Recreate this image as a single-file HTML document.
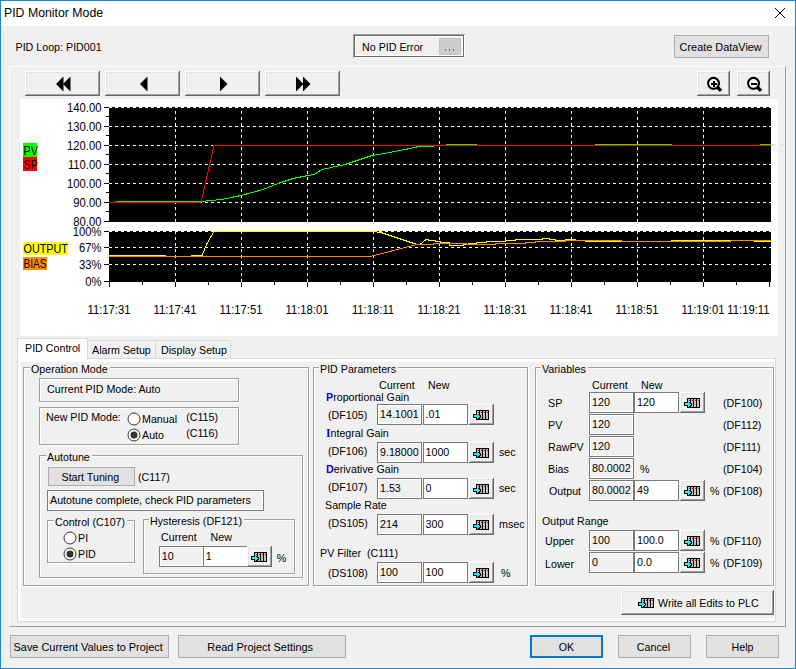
<!DOCTYPE html>
<html><head><meta charset="utf-8"><style>
html,body{margin:0;padding:0;}
body{width:796px;height:669px;position:relative;overflow:hidden;background:#f0f0f0;font-family:"Liberation Sans",sans-serif;}
.t{position:absolute;white-space:nowrap;line-height:1;}
.r{position:absolute;box-sizing:border-box;}
svg{position:absolute;overflow:visible;}
</style></head><body>

<div class="r" style="left:1px;top:1px;width:794px;height:25px;background:#fff;"></div>
<div class="t" style="left:4px;top:7px;font-size:12.3px;color:#000;">PID Monitor Mode</div>
<svg style="left:775px;top:8px" width="10" height="10" shape-rendering="crispEdges" fill="#000"><rect x="0" y="0" width="1" height="1"/><rect x="9" y="0" width="1" height="1"/><rect x="1" y="1" width="1" height="1"/><rect x="8" y="1" width="1" height="1"/><rect x="2" y="2" width="1" height="1"/><rect x="7" y="2" width="1" height="1"/><rect x="3" y="3" width="1" height="1"/><rect x="6" y="3" width="1" height="1"/><rect x="4" y="4" width="1" height="1"/><rect x="5" y="4" width="1" height="1"/><rect x="5" y="5" width="1" height="1"/><rect x="4" y="5" width="1" height="1"/><rect x="6" y="6" width="1" height="1"/><rect x="3" y="6" width="1" height="1"/><rect x="7" y="7" width="1" height="1"/><rect x="2" y="7" width="1" height="1"/><rect x="8" y="8" width="1" height="1"/><rect x="1" y="8" width="1" height="1"/><rect x="9" y="9" width="1" height="1"/><rect x="0" y="9" width="1" height="1"/></svg>
<div class="t" style="left:15.5px;top:42px;font-size:10.7px;color:#000;">PID Loop: PID001</div>
<div class="r" style="left:353px;top:34px;width:112px;height:24px;background:#f0f0f0;box-shadow:inset 1px 1px 0 #a0a0a0, inset -1px -1px 0 #fff, inset 2px 2px 0 #696969, inset -2px -2px 0 #696969, inset 3px 3px 0 #fff, inset -3px -3px 0 #fff;"></div>
<div class="t" style="left:362px;top:42px;font-size:10.7px;color:#000;">No PID Error</div>
<div class="r" style="left:439px;top:38px;width:22px;height:17px;background:#cdcdcd;border:1px solid #c4c4c4;"></div>
<svg style="left:0;top:0" width="796" height="60" shape-rendering="crispEdges"><rect x="445" y="49" width="1" height="2" fill="#7a6f9a"/><rect x="449" y="49" width="1" height="2" fill="#7a6f9a"/><rect x="453" y="49" width="1" height="2" fill="#7a6f9a"/></svg>
<div class="r" style="left:674px;top:35px;width:95px;height:23px;background:#e1e1e1;border:1px solid #adadad;"></div>
<div class="t" style="left:679.6px;top:42px;font-size:10.9px;color:#000;">Create DataView</div>
<div class="r" style="left:9px;top:66px;width:777px;height:561px;border-left:1px solid #fff;border-top:1px solid #fff;border-right:1px solid #a0a0a0;border-bottom:1px solid #a0a0a0;"></div>
<div class="r" style="left:25px;top:71px;width:75px;height:25px;background:#f0f0f0;box-shadow: inset -1px -1px 0 #696969, inset 1px 1px 0 #fff, inset -2px -2px 0 #a0a0a0, inset 2px 2px 0 #e3e3e3;"></div>
<div class="r" style="left:105px;top:71px;width:75px;height:25px;background:#f0f0f0;box-shadow: inset -1px -1px 0 #696969, inset 1px 1px 0 #fff, inset -2px -2px 0 #a0a0a0, inset 2px 2px 0 #e3e3e3;"></div>
<div class="r" style="left:185px;top:71px;width:75px;height:25px;background:#f0f0f0;box-shadow: inset -1px -1px 0 #696969, inset 1px 1px 0 #fff, inset -2px -2px 0 #a0a0a0, inset 2px 2px 0 #e3e3e3;"></div>
<div class="r" style="left:265px;top:71px;width:75px;height:25px;background:#f0f0f0;box-shadow: inset -1px -1px 0 #696969, inset 1px 1px 0 #fff, inset -2px -2px 0 #a0a0a0, inset 2px 2px 0 #e3e3e3;"></div>
<svg style="left:0;top:0" width="796" height="100"><polygon points="56,84 63.5,76.5 63.5,91.5" fill="#000"/><polygon points="63,84 70.5,76.5 70.5,91.5" fill="#000"/><polygon points="140,84 147.5,76.5 147.5,91.5" fill="#000"/><polygon points="227.5,84 220,76.5 220,91.5" fill="#000"/><polygon points="303.5,84 296,76.5 296,91.5" fill="#000"/><polygon points="310.5,84 303,76.5 303,91.5" fill="#000"/></svg>
<div class="r" style="left:697px;top:71px;width:33px;height:25px;background:#f0f0f0;box-shadow: inset -1px -1px 0 #696969, inset 1px 1px 0 #fff, inset -2px -2px 0 #a0a0a0, inset 2px 2px 0 #e3e3e3;"></div>
<div class="r" style="left:737px;top:71px;width:33px;height:25px;background:#f0f0f0;box-shadow: inset -1px -1px 0 #696969, inset 1px 1px 0 #fff, inset -2px -2px 0 #a0a0a0, inset 2px 2px 0 #e3e3e3;"></div>
<svg style="left:0;top:0" width="796" height="100"><circle cx="713.5" cy="83.3" r="5.45" fill="#fff" stroke="#000" stroke-width="2.1"/><line x1="717.1" y1="86.89999999999999" x2="721.1" y2="90.89999999999999" stroke="#000" stroke-width="3.4"/><rect x="711" y="83" width="6" height="2" fill="#000" shape-rendering="crispEdges"/><rect x="713" y="81" width="2" height="6" fill="#000" shape-rendering="crispEdges"/><circle cx="753.5" cy="83.3" r="5.45" fill="#fff" stroke="#000" stroke-width="2.1"/><line x1="757.1" y1="86.89999999999999" x2="761.1" y2="90.89999999999999" stroke="#000" stroke-width="3.4"/><rect x="751" y="83" width="6" height="2" fill="#000" shape-rendering="crispEdges"/></svg>
<div class="r" style="left:20px;top:99px;width:758px;height:237px;background:#fff;"></div>
<svg style="left:0;top:0" width="796" height="340" shape-rendering="crispEdges" font-family="Liberation Sans" font-size="12"><rect x="109" y="107" width="662" height="115" fill="#000"/><rect x="109" y="231" width="662" height="51" fill="#000"/><line x1="109" y1="107.5" x2="771" y2="107.5" stroke="#fff" stroke-dasharray="3 3"/><line x1="109" y1="126.5" x2="771" y2="126.5" stroke="#fff" stroke-dasharray="3 3"/><line x1="109" y1="145.5" x2="771" y2="145.5" stroke="#fff" stroke-dasharray="3 3"/><line x1="109" y1="164.5" x2="771" y2="164.5" stroke="#fff" stroke-dasharray="3 3"/><line x1="109" y1="183.5" x2="771" y2="183.5" stroke="#fff" stroke-dasharray="3 3"/><line x1="109" y1="202.5" x2="771" y2="202.5" stroke="#fff" stroke-dasharray="3 3"/><line x1="109" y1="231.5" x2="771" y2="231.5" stroke="#fff" stroke-dasharray="3 3"/><line x1="109" y1="247.5" x2="771" y2="247.5" stroke="#fff" stroke-dasharray="3 3"/><line x1="109" y1="264.5" x2="771" y2="264.5" stroke="#fff" stroke-dasharray="3 3"/><line x1="175.5" y1="107" x2="175.5" y2="222" stroke="#fff" stroke-dasharray="3 3" stroke-dashoffset="2"/><line x1="175.5" y1="231" x2="175.5" y2="282" stroke="#fff" stroke-dasharray="3 3"/><line x1="241.5" y1="107" x2="241.5" y2="222" stroke="#fff" stroke-dasharray="3 3" stroke-dashoffset="2"/><line x1="241.5" y1="231" x2="241.5" y2="282" stroke="#fff" stroke-dasharray="3 3"/><line x1="307.5" y1="107" x2="307.5" y2="222" stroke="#fff" stroke-dasharray="3 3" stroke-dashoffset="2"/><line x1="307.5" y1="231" x2="307.5" y2="282" stroke="#fff" stroke-dasharray="3 3"/><line x1="373.5" y1="107" x2="373.5" y2="222" stroke="#fff" stroke-dasharray="3 3" stroke-dashoffset="2"/><line x1="373.5" y1="231" x2="373.5" y2="282" stroke="#fff" stroke-dasharray="3 3"/><line x1="439.5" y1="107" x2="439.5" y2="222" stroke="#fff" stroke-dasharray="3 3" stroke-dashoffset="2"/><line x1="439.5" y1="231" x2="439.5" y2="282" stroke="#fff" stroke-dasharray="3 3"/><line x1="505.5" y1="107" x2="505.5" y2="222" stroke="#fff" stroke-dasharray="3 3" stroke-dashoffset="2"/><line x1="505.5" y1="231" x2="505.5" y2="282" stroke="#fff" stroke-dasharray="3 3"/><line x1="571.5" y1="107" x2="571.5" y2="222" stroke="#fff" stroke-dasharray="3 3" stroke-dashoffset="2"/><line x1="571.5" y1="231" x2="571.5" y2="282" stroke="#fff" stroke-dasharray="3 3"/><line x1="637.5" y1="107" x2="637.5" y2="222" stroke="#fff" stroke-dasharray="3 3" stroke-dashoffset="2"/><line x1="637.5" y1="231" x2="637.5" y2="282" stroke="#fff" stroke-dasharray="3 3"/><line x1="703.5" y1="107" x2="703.5" y2="222" stroke="#fff" stroke-dasharray="3 3" stroke-dashoffset="2"/><line x1="703.5" y1="231" x2="703.5" y2="282" stroke="#fff" stroke-dasharray="3 3"/><line x1="104" y1="107.5" x2="109" y2="107.5" stroke="#000"/><line x1="106" y1="116.5" x2="109" y2="116.5" stroke="#000"/><line x1="104" y1="126.5" x2="109" y2="126.5" stroke="#000"/><line x1="106" y1="135.5" x2="109" y2="135.5" stroke="#000"/><line x1="104" y1="145.5" x2="109" y2="145.5" stroke="#000"/><line x1="106" y1="154.5" x2="109" y2="154.5" stroke="#000"/><line x1="104" y1="164.5" x2="109" y2="164.5" stroke="#000"/><line x1="106" y1="173.5" x2="109" y2="173.5" stroke="#000"/><line x1="104" y1="183.5" x2="109" y2="183.5" stroke="#000"/><line x1="106" y1="192.5" x2="109" y2="192.5" stroke="#000"/><line x1="104" y1="202.5" x2="109" y2="202.5" stroke="#000"/><line x1="106" y1="211.5" x2="109" y2="211.5" stroke="#000"/><line x1="104" y1="221.5" x2="109" y2="221.5" stroke="#000"/><line x1="104" y1="231.5" x2="109" y2="231.5" stroke="#000"/><line x1="104" y1="247.5" x2="109" y2="247.5" stroke="#000"/><line x1="104" y1="264.5" x2="109" y2="264.5" stroke="#000"/><line x1="104" y1="281.5" x2="109" y2="281.5" stroke="#000"/><line x1="109.5" y1="282" x2="109.5" y2="287" stroke="#000"/><line x1="142.5" y1="282" x2="142.5" y2="285" stroke="#000"/><line x1="175.5" y1="282" x2="175.5" y2="287" stroke="#000"/><line x1="208.5" y1="282" x2="208.5" y2="285" stroke="#000"/><line x1="241.5" y1="282" x2="241.5" y2="287" stroke="#000"/><line x1="274.5" y1="282" x2="274.5" y2="285" stroke="#000"/><line x1="307.5" y1="282" x2="307.5" y2="287" stroke="#000"/><line x1="340.5" y1="282" x2="340.5" y2="285" stroke="#000"/><line x1="373.5" y1="282" x2="373.5" y2="287" stroke="#000"/><line x1="406.5" y1="282" x2="406.5" y2="285" stroke="#000"/><line x1="439.5" y1="282" x2="439.5" y2="287" stroke="#000"/><line x1="472.5" y1="282" x2="472.5" y2="285" stroke="#000"/><line x1="505.5" y1="282" x2="505.5" y2="287" stroke="#000"/><line x1="538.5" y1="282" x2="538.5" y2="285" stroke="#000"/><line x1="571.5" y1="282" x2="571.5" y2="287" stroke="#000"/><line x1="604.5" y1="282" x2="604.5" y2="285" stroke="#000"/><line x1="637.5" y1="282" x2="637.5" y2="287" stroke="#000"/><line x1="670.5" y1="282" x2="670.5" y2="285" stroke="#000"/><line x1="703.5" y1="282" x2="703.5" y2="287" stroke="#000"/><line x1="736.5" y1="282" x2="736.5" y2="285" stroke="#000"/><line x1="769.5" y1="282" x2="769.5" y2="287" stroke="#000"/><text transform="translate(101.5,112) scale(0.94,1)" text-anchor="end">140.00</text><text transform="translate(101.5,131) scale(0.94,1)" text-anchor="end">130.00</text><text transform="translate(101.5,150) scale(0.94,1)" text-anchor="end">120.00</text><text transform="translate(101.5,169) scale(0.94,1)" text-anchor="end">110.00</text><text transform="translate(101.5,188) scale(0.94,1)" text-anchor="end">100.00</text><text transform="translate(101.5,207) scale(0.94,1)" text-anchor="end">90.00</text><text transform="translate(101.5,226) scale(0.94,1)" text-anchor="end">80.00</text><text transform="translate(101.5,236) scale(0.94,1)" text-anchor="end">100%</text><text transform="translate(101.5,252) scale(0.94,1)" text-anchor="end">67%</text><text transform="translate(101.5,269) scale(0.94,1)" text-anchor="end">33%</text><text transform="translate(101.5,286) scale(0.94,1)" text-anchor="end">0%</text><text transform="translate(109,314) scale(0.94,1)" text-anchor="middle">11:17:31</text><text transform="translate(175,314) scale(0.94,1)" text-anchor="middle">11:17:41</text><text transform="translate(241,314) scale(0.94,1)" text-anchor="middle">11:17:51</text><text transform="translate(307,314) scale(0.94,1)" text-anchor="middle">11:18:01</text><text transform="translate(373,314) scale(0.94,1)" text-anchor="middle">11:18:11</text><text transform="translate(439,314) scale(0.94,1)" text-anchor="middle">11:18:21</text><text transform="translate(505,314) scale(0.94,1)" text-anchor="middle">11:18:31</text><text transform="translate(571,314) scale(0.94,1)" text-anchor="middle">11:18:41</text><text transform="translate(637,314) scale(0.94,1)" text-anchor="middle">11:18:51</text><text transform="translate(703,314) scale(0.94,1)" text-anchor="middle">11:19:01</text><text transform="translate(769.5,314) scale(0.94,1)" text-anchor="end">11:19:11</text><rect x="23" y="143" width="14" height="14" fill="#00ff00"/><rect x="23" y="157" width="14" height="14" fill="#ff0000"/><rect x="23" y="242" width="45" height="13" fill="#ffff00"/><rect x="23" y="257" width="24" height="13" fill="#ff8c00"/><text transform="translate(23.5,155) scale(0.9,1)" text-anchor="start">PV</text><text transform="translate(23.5,169) scale(0.9,1)" text-anchor="start">SP</text><text transform="translate(23.5,253) scale(0.9,1)" text-anchor="start">OUTPUT</text><text transform="translate(23.5,268) scale(0.84,1)" text-anchor="start">BIAS</text><polyline points="116,201.5 201,201.5 211,200.5 222,199.5 231,197.5 241,195.5 252,192.5 263,189.5 278,183.5 293,178.5 308,175.5 314,174.5 322,169.5 345,164.5 372,155.5 390,152.5 410,148.5 415,147.5 418,146.5 433,146.5 433,145.5 446,145.5 446,144.5 476,144.5 476,145.5 595,145.5 595,144.5 671,144.5 671,145.5 760,145.5 760,144.5 771,144.5" fill="none" stroke="#00ff00" stroke-width="1"/><polyline points="109,202.5 201,202.5 214,145.5 771,145.5" fill="none" stroke="#ff0000" stroke-width="1"/><polyline points="109,255.5 165,255.5 165,256.5 191,256.5 191,255.5 202,255.5 207,243.5 214,231.5 373,231.5 381,232.5 417,244.5 420,244.5 426,239.5 428,239.5 429,240.5 435,240.5 435,241.5 440,241.5 440,242.5 449,242.5 449,244.5 450,245.5 463,245.5 463,244.5 468,244.5 468,243.5 476,243.5 476,242.5 486,242.5 486,241.5 505,241.5 505,240.5 515,240.5 515,239.5 542,239.5 542,238.5 549,238.5 549,239.5 555,239.5 555,240.5 565,240.5 565,239.5 575,239.5 575,240.5 585,240.5 585,241.5 671,241.5 671,240.5 754,240.5 754,241.5 771,241.5" fill="none" stroke="#ffff00" stroke-width="1"/><polyline points="109,256.5 370,256.5 417,244.5 433,244.5 433,243.5 466,243.5 466,244.5 495,244.5 495,243.5 525,243.5 525,242.5 535,242.5 535,241.5 565,241.5 565,240.5 621,240.5 621,241.5 671,241.5 730,241.5 730,240.5 771,240.5" fill="none" stroke="#ff8c00" stroke-width="1"/></svg>
<div class="r" style="left:17px;top:358px;width:759px;height:264px;background:#fff;border:1px solid #d9d9d9;"></div>
<div class="r" style="left:21px;top:362px;width:753px;height:256px;background:#f0f0f0;"></div>
<div class="r" style="left:87px;top:340px;width:69px;height:19px;background:#f0f0f0;border:1px solid #d9d9d9;"></div>
<div class="r" style="left:155px;top:340px;width:76px;height:19px;background:#f0f0f0;border:1px solid #d9d9d9;"></div>
<div class="r" style="left:17px;top:338px;width:71px;height:22px;background:#fff;border:1px solid #d9d9d9;border-bottom:none;"></div>
<div class="t" style="left:25px;top:343px;font-size:10.7px;color:#000;">PID Control</div>
<div class="t" style="left:92px;top:345px;font-size:10.7px;color:#000;">Alarm Setup</div>
<div class="t" style="left:161px;top:345px;font-size:10.7px;color:#000;">Display Setup</div>
<div class="r" style="left:23px;top:367px;width:286px;height:219px;border:1px solid #a0a0a0;box-shadow:inset 1px 1px 0 #fff, 1px 1px 0 #fff;"></div>
<div class="t" style="left:30px;top:363px;font-size:10.7px;background:#f0f0f0;padding:1px 2px 1px 1px;">Operation Mode</div>
<div class="r" style="left:39px;top:378px;width:200px;height:24px;border:1px solid #a0a0a0;box-shadow:inset 1px 1px 0 #fff, 1px 1px 0 #fff;"></div>
<div class="t" style="left:47px;top:384px;font-size:10.7px;color:#000;">Current PID Mode: Auto</div>
<div class="r" style="left:39px;top:407px;width:200px;height:38px;border:1px solid #a0a0a0;box-shadow:inset 1px 1px 0 #fff, 1px 1px 0 #fff;"></div>
<div class="t" style="left:46px;top:412px;font-size:10.7px;color:#000;">New PID Mode:</div>
<svg style="left:126.5px;top:411.5px" width="14" height="14"><circle cx="7" cy="7" r="6" fill="#fff" stroke="#333" stroke-width="1"/></svg>
<svg style="left:126.5px;top:427.5px" width="14" height="14"><circle cx="7" cy="7" r="6" fill="#fff" stroke="#333" stroke-width="1"/><circle cx="7" cy="7" r="3.5" fill="#333"/></svg>
<div class="t" style="left:142px;top:414px;font-size:10.7px;color:#000;">Manual</div>
<div class="t" style="left:142px;top:430px;font-size:10.7px;color:#000;">Auto</div>
<div class="t" style="left:186.2px;top:412px;font-size:10.7px;color:#000;">(C115)</div>
<div class="t" style="left:186.2px;top:428px;font-size:10.7px;color:#000;">(C116)</div>
<div class="r" style="left:39px;top:455px;width:264px;height:123px;border:1px solid #a0a0a0;box-shadow:inset 1px 1px 0 #fff, 1px 1px 0 #fff;"></div>
<div class="t" style="left:46px;top:451px;font-size:10.7px;background:#f0f0f0;padding:1px 2px 1px 1px;">Autotune</div>
<div class="r" style="left:48px;top:467px;width:87px;height:19px;background:#e1e1e1;border:1px solid #adadad;"></div>
<div class="t" style="left:61.5px;top:472px;font-size:10.7px;color:#000;">Start Tuning</div>
<div class="t" style="left:138px;top:472px;font-size:10.7px;color:#000;">(C117)</div>
<div class="r" style="left:47px;top:490px;width:217px;height:21px;background:#f0f0f0;border:1px solid #7a7a7a;box-shadow:inset 1px 1px 0 #fff, inset -1px -1px 0 #fff;"></div>
<div class="t" style="left:50px;top:495px;font-size:10.7px;color:#000;">Autotune complete, check PID parameters</div>
<div class="r" style="left:47px;top:520px;width:88px;height:43px;border:1px solid #a0a0a0;box-shadow:inset 1px 1px 0 #fff, 1px 1px 0 #fff;"></div>
<div class="t" style="left:54px;top:516px;font-size:10.7px;background:#f0f0f0;padding:1px 2px 1px 1px;">Control (C107)</div>
<svg style="left:62.5px;top:530.5px" width="14" height="14"><circle cx="7" cy="7" r="6" fill="#fff" stroke="#333" stroke-width="1"/></svg>
<svg style="left:62.5px;top:546.5px" width="14" height="14"><circle cx="7" cy="7" r="6" fill="#fff" stroke="#333" stroke-width="1"/><circle cx="7" cy="7" r="3.5" fill="#333"/></svg>
<div class="t" style="left:78px;top:533px;font-size:10.7px;color:#000;">PI</div>
<div class="t" style="left:78px;top:549px;font-size:10.7px;color:#000;">PID</div>
<div class="r" style="left:143px;top:519px;width:152px;height:55px;border:1px solid #a0a0a0;box-shadow:inset 1px 1px 0 #fff, 1px 1px 0 #fff;"></div>
<div class="t" style="left:149px;top:515px;font-size:10.7px;background:#f0f0f0;padding:1px 2px 1px 1px;">Hysteresis (DF121)</div>
<div class="t" style="left:161px;top:532px;font-size:10.7px;color:#000;">Current</div>
<div class="t" style="left:210.5px;top:532px;font-size:10.7px;color:#000;">New</div>
<div class="r" style="left:159px;top:546px;width:45px;height:21px;background:#f0f0f0;border:1px solid #7a7a7a;box-shadow:inset 1px 1px 0 #fff, inset -1px -1px 0 #fff;"></div>
<div class="t" style="left:161.7px;top:551px;font-size:10.7px;color:#000;">10</div>
<div class="r" style="left:203px;top:546px;width:46px;height:21px;background:#fff;border:1px solid #7a7a7a;"></div>
<div class="t" style="left:205.7px;top:551px;font-size:10.7px;color:#000;">1</div>
<div class="r" style="left:247px;top:546px;width:25px;height:21px;background:#f0f0f0;box-shadow: inset -1px -1px 0 #696969, inset 1px 1px 0 #fff, inset -2px -2px 0 #a0a0a0, inset 2px 2px 0 #e3e3e3;"></div>
<svg style="left:251px;top:552px" width="17" height="11" shape-rendering="crispEdges"><rect x="3" y="0" width="13" height="10" fill="#000"/><rect x="4" y="1" width="2" height="3" fill="#c0c0c0"/><rect x="7" y="1" width="2" height="8" fill="#c0c0c0"/><rect x="10" y="1" width="2" height="8" fill="#c0c0c0"/><rect x="13" y="1" width="2" height="8" fill="#c0c0c0"/><rect x="5" y="2" width="1" height="1" fill="#ff0000"/><rect x="8" y="2" width="1" height="1" fill="#ff0000"/><rect x="11" y="2" width="1" height="1" fill="#ff0000"/><rect x="14" y="2" width="1" height="1" fill="#ff0000"/><rect x="0" y="4" width="3" height="4" fill="#000"/><rect x="7" y="5" width="1" height="3" fill="#000"/><rect x="1" y="5" width="3" height="2" fill="#00ffff"/><rect x="4" y="4" width="1" height="5" fill="#00ffff"/><rect x="5" y="5" width="1" height="3" fill="#00ffff"/><rect x="6" y="6" width="1" height="1" fill="#00ffff"/></svg>
<div class="t" style="left:276.8px;top:553px;font-size:10.7px;color:#000;">%</div>
<div class="r" style="left:313px;top:367px;width:215px;height:219px;border:1px solid #a0a0a0;box-shadow:inset 1px 1px 0 #fff, 1px 1px 0 #fff;"></div>
<div class="t" style="left:319px;top:363px;font-size:10.7px;background:#f0f0f0;padding:1px 2px 1px 1px;">PID Parameters</div>
<div class="t" style="left:379px;top:380px;font-size:10.7px;color:#000;">Current</div>
<div class="t" style="left:428px;top:380px;font-size:10.7px;color:#000;">New</div>
<div class="t" style="left:326px;top:392px;font-size:10.7px;"><b style="color:#0000ff;">P</b>roportional Gain</div>
<div class="t" style="left:328px;top:410px;font-size:10.7px;color:#000;">(DF105)</div>
<div class="r" style="left:377px;top:404px;width:45px;height:21px;background:#f0f0f0;border:1px solid #7a7a7a;box-shadow:inset 1px 1px 0 #fff, inset -1px -1px 0 #fff;"></div>
<div class="t" style="left:380px;top:409px;font-size:10.7px;color:#000;">14.1001</div>
<div class="r" style="left:423px;top:404px;width:45px;height:21px;background:#fff;border:1px solid #7a7a7a;"></div>
<div class="t" style="left:425.5px;top:409px;font-size:10.7px;color:#000;">.01</div>
<div class="r" style="left:469px;top:404px;width:25px;height:21px;background:#f0f0f0;box-shadow: inset -1px -1px 0 #696969, inset 1px 1px 0 #fff, inset -2px -2px 0 #a0a0a0, inset 2px 2px 0 #e3e3e3;"></div>
<svg style="left:473px;top:410px" width="17" height="11" shape-rendering="crispEdges"><rect x="3" y="0" width="13" height="10" fill="#000"/><rect x="4" y="1" width="2" height="3" fill="#c0c0c0"/><rect x="7" y="1" width="2" height="8" fill="#c0c0c0"/><rect x="10" y="1" width="2" height="8" fill="#c0c0c0"/><rect x="13" y="1" width="2" height="8" fill="#c0c0c0"/><rect x="5" y="2" width="1" height="1" fill="#ff0000"/><rect x="8" y="2" width="1" height="1" fill="#ff0000"/><rect x="11" y="2" width="1" height="1" fill="#ff0000"/><rect x="14" y="2" width="1" height="1" fill="#ff0000"/><rect x="0" y="4" width="3" height="4" fill="#000"/><rect x="7" y="5" width="1" height="3" fill="#000"/><rect x="1" y="5" width="3" height="2" fill="#00ffff"/><rect x="4" y="4" width="1" height="5" fill="#00ffff"/><rect x="5" y="5" width="1" height="3" fill="#00ffff"/><rect x="6" y="6" width="1" height="1" fill="#00ffff"/></svg>
<div class="t" style="left:326px;top:428px;font-size:10.7px;"><b style="color:#0000ff;font-family:'Liberation Serif',serif;font-size:11.5px;">I</b>ntegral Gain</div>
<div class="t" style="left:328px;top:446px;font-size:10.7px;color:#000;">(DF106)</div>
<div class="r" style="left:377px;top:442px;width:45px;height:21px;background:#f0f0f0;border:1px solid #7a7a7a;box-shadow:inset 1px 1px 0 #fff, inset -1px -1px 0 #fff;"></div>
<div class="t" style="left:380px;top:447px;font-size:10.7px;color:#000;">9.18000</div>
<div class="r" style="left:423px;top:442px;width:45px;height:21px;background:#fff;border:1px solid #7a7a7a;"></div>
<div class="t" style="left:425.5px;top:447px;font-size:10.7px;color:#000;">1000</div>
<div class="r" style="left:469px;top:442px;width:25px;height:21px;background:#f0f0f0;box-shadow: inset -1px -1px 0 #696969, inset 1px 1px 0 #fff, inset -2px -2px 0 #a0a0a0, inset 2px 2px 0 #e3e3e3;"></div>
<svg style="left:473px;top:448px" width="17" height="11" shape-rendering="crispEdges"><rect x="3" y="0" width="13" height="10" fill="#000"/><rect x="4" y="1" width="2" height="3" fill="#c0c0c0"/><rect x="7" y="1" width="2" height="8" fill="#c0c0c0"/><rect x="10" y="1" width="2" height="8" fill="#c0c0c0"/><rect x="13" y="1" width="2" height="8" fill="#c0c0c0"/><rect x="5" y="2" width="1" height="1" fill="#ff0000"/><rect x="8" y="2" width="1" height="1" fill="#ff0000"/><rect x="11" y="2" width="1" height="1" fill="#ff0000"/><rect x="14" y="2" width="1" height="1" fill="#ff0000"/><rect x="0" y="4" width="3" height="4" fill="#000"/><rect x="7" y="5" width="1" height="3" fill="#000"/><rect x="1" y="5" width="3" height="2" fill="#00ffff"/><rect x="4" y="4" width="1" height="5" fill="#00ffff"/><rect x="5" y="5" width="1" height="3" fill="#00ffff"/><rect x="6" y="6" width="1" height="1" fill="#00ffff"/></svg>
<div class="t" style="left:499px;top:447px;font-size:10.7px;color:#000;">sec</div>
<div class="t" style="left:326px;top:464px;font-size:10.7px;"><b style="color:#0000ff;">D</b>erivative Gain</div>
<div class="t" style="left:328px;top:482px;font-size:10.7px;color:#000;">(DF107)</div>
<div class="r" style="left:377px;top:478px;width:45px;height:21px;background:#f0f0f0;border:1px solid #7a7a7a;box-shadow:inset 1px 1px 0 #fff, inset -1px -1px 0 #fff;"></div>
<div class="t" style="left:380px;top:483px;font-size:10.7px;color:#000;">1.53</div>
<div class="r" style="left:423px;top:478px;width:45px;height:21px;background:#fff;border:1px solid #7a7a7a;"></div>
<div class="t" style="left:425.5px;top:483px;font-size:10.7px;color:#000;">0</div>
<div class="r" style="left:469px;top:478px;width:25px;height:21px;background:#f0f0f0;box-shadow: inset -1px -1px 0 #696969, inset 1px 1px 0 #fff, inset -2px -2px 0 #a0a0a0, inset 2px 2px 0 #e3e3e3;"></div>
<svg style="left:473px;top:484px" width="17" height="11" shape-rendering="crispEdges"><rect x="3" y="0" width="13" height="10" fill="#000"/><rect x="4" y="1" width="2" height="3" fill="#c0c0c0"/><rect x="7" y="1" width="2" height="8" fill="#c0c0c0"/><rect x="10" y="1" width="2" height="8" fill="#c0c0c0"/><rect x="13" y="1" width="2" height="8" fill="#c0c0c0"/><rect x="5" y="2" width="1" height="1" fill="#ff0000"/><rect x="8" y="2" width="1" height="1" fill="#ff0000"/><rect x="11" y="2" width="1" height="1" fill="#ff0000"/><rect x="14" y="2" width="1" height="1" fill="#ff0000"/><rect x="0" y="4" width="3" height="4" fill="#000"/><rect x="7" y="5" width="1" height="3" fill="#000"/><rect x="1" y="5" width="3" height="2" fill="#00ffff"/><rect x="4" y="4" width="1" height="5" fill="#00ffff"/><rect x="5" y="5" width="1" height="3" fill="#00ffff"/><rect x="6" y="6" width="1" height="1" fill="#00ffff"/></svg>
<div class="t" style="left:499px;top:483px;font-size:10.7px;color:#000;">sec</div>
<div class="t" style="left:325px;top:500px;font-size:10.7px;color:#000;">Sample Rate</div>
<div class="t" style="left:328px;top:518px;font-size:10.7px;color:#000;">(DS105)</div>
<div class="r" style="left:377px;top:514px;width:45px;height:21px;background:#f0f0f0;border:1px solid #7a7a7a;box-shadow:inset 1px 1px 0 #fff, inset -1px -1px 0 #fff;"></div>
<div class="t" style="left:380px;top:519px;font-size:10.7px;color:#000;">214</div>
<div class="r" style="left:423px;top:514px;width:45px;height:21px;background:#fff;border:1px solid #7a7a7a;"></div>
<div class="t" style="left:425.5px;top:519px;font-size:10.7px;color:#000;">300</div>
<div class="r" style="left:469px;top:514px;width:25px;height:21px;background:#f0f0f0;box-shadow: inset -1px -1px 0 #696969, inset 1px 1px 0 #fff, inset -2px -2px 0 #a0a0a0, inset 2px 2px 0 #e3e3e3;"></div>
<svg style="left:473px;top:520px" width="17" height="11" shape-rendering="crispEdges"><rect x="3" y="0" width="13" height="10" fill="#000"/><rect x="4" y="1" width="2" height="3" fill="#c0c0c0"/><rect x="7" y="1" width="2" height="8" fill="#c0c0c0"/><rect x="10" y="1" width="2" height="8" fill="#c0c0c0"/><rect x="13" y="1" width="2" height="8" fill="#c0c0c0"/><rect x="5" y="2" width="1" height="1" fill="#ff0000"/><rect x="8" y="2" width="1" height="1" fill="#ff0000"/><rect x="11" y="2" width="1" height="1" fill="#ff0000"/><rect x="14" y="2" width="1" height="1" fill="#ff0000"/><rect x="0" y="4" width="3" height="4" fill="#000"/><rect x="7" y="5" width="1" height="3" fill="#000"/><rect x="1" y="5" width="3" height="2" fill="#00ffff"/><rect x="4" y="4" width="1" height="5" fill="#00ffff"/><rect x="5" y="5" width="1" height="3" fill="#00ffff"/><rect x="6" y="6" width="1" height="1" fill="#00ffff"/></svg>
<div class="t" style="left:499px;top:519px;font-size:10.7px;color:#000;">msec</div>
<div class="t" style="left:320px;top:548px;font-size:10.7px;color:#000;">PV Filter&nbsp; (C111)</div>
<div class="t" style="left:328px;top:568px;font-size:10.7px;color:#000;">(DS108)</div>
<div class="r" style="left:377px;top:562px;width:45px;height:21px;background:#f0f0f0;border:1px solid #7a7a7a;box-shadow:inset 1px 1px 0 #fff, inset -1px -1px 0 #fff;"></div>
<div class="t" style="left:380px;top:567px;font-size:10.7px;color:#000;">100</div>
<div class="r" style="left:423px;top:562px;width:45px;height:21px;background:#fff;border:1px solid #7a7a7a;"></div>
<div class="t" style="left:425.5px;top:567px;font-size:10.7px;color:#000;">100</div>
<div class="r" style="left:469px;top:562px;width:25px;height:21px;background:#f0f0f0;box-shadow: inset -1px -1px 0 #696969, inset 1px 1px 0 #fff, inset -2px -2px 0 #a0a0a0, inset 2px 2px 0 #e3e3e3;"></div>
<svg style="left:473px;top:568px" width="17" height="11" shape-rendering="crispEdges"><rect x="3" y="0" width="13" height="10" fill="#000"/><rect x="4" y="1" width="2" height="3" fill="#c0c0c0"/><rect x="7" y="1" width="2" height="8" fill="#c0c0c0"/><rect x="10" y="1" width="2" height="8" fill="#c0c0c0"/><rect x="13" y="1" width="2" height="8" fill="#c0c0c0"/><rect x="5" y="2" width="1" height="1" fill="#ff0000"/><rect x="8" y="2" width="1" height="1" fill="#ff0000"/><rect x="11" y="2" width="1" height="1" fill="#ff0000"/><rect x="14" y="2" width="1" height="1" fill="#ff0000"/><rect x="0" y="4" width="3" height="4" fill="#000"/><rect x="7" y="5" width="1" height="3" fill="#000"/><rect x="1" y="5" width="3" height="2" fill="#00ffff"/><rect x="4" y="4" width="1" height="5" fill="#00ffff"/><rect x="5" y="5" width="1" height="3" fill="#00ffff"/><rect x="6" y="6" width="1" height="1" fill="#00ffff"/></svg>
<div class="t" style="left:501px;top:568px;font-size:10.7px;color:#000;">%</div>
<div class="r" style="left:535px;top:367px;width:239px;height:219px;border:1px solid #a0a0a0;box-shadow:inset 1px 1px 0 #fff, 1px 1px 0 #fff;"></div>
<div class="t" style="left:541px;top:363px;font-size:10.7px;background:#f0f0f0;padding:1px 2px 1px 1px;">Variables</div>
<div class="t" style="left:592px;top:380px;font-size:10.7px;color:#000;">Current</div>
<div class="t" style="left:641px;top:380px;font-size:10.7px;color:#000;">New</div>
<div class="t" style="left:548px;top:398px;font-size:10.7px;color:#000;">SP</div>
<div class="r" style="left:589px;top:392px;width:45px;height:21px;background:#f0f0f0;border:1px solid #7a7a7a;box-shadow:inset 1px 1px 0 #fff, inset -1px -1px 0 #fff;"></div>
<div class="t" style="left:592px;top:397px;font-size:10.7px;color:#000;">120</div>
<div class="r" style="left:634px;top:392px;width:45px;height:21px;background:#fff;border:1px solid #7a7a7a;"></div>
<div class="t" style="left:637px;top:397px;font-size:10.7px;color:#000;">120</div>
<div class="r" style="left:680px;top:392px;width:25px;height:21px;background:#f0f0f0;box-shadow: inset -1px -1px 0 #696969, inset 1px 1px 0 #fff, inset -2px -2px 0 #a0a0a0, inset 2px 2px 0 #e3e3e3;"></div>
<svg style="left:684px;top:398px" width="17" height="11" shape-rendering="crispEdges"><rect x="3" y="0" width="13" height="10" fill="#000"/><rect x="4" y="1" width="2" height="3" fill="#c0c0c0"/><rect x="7" y="1" width="2" height="8" fill="#c0c0c0"/><rect x="10" y="1" width="2" height="8" fill="#c0c0c0"/><rect x="13" y="1" width="2" height="8" fill="#c0c0c0"/><rect x="5" y="2" width="1" height="1" fill="#ff0000"/><rect x="8" y="2" width="1" height="1" fill="#ff0000"/><rect x="11" y="2" width="1" height="1" fill="#ff0000"/><rect x="14" y="2" width="1" height="1" fill="#ff0000"/><rect x="0" y="4" width="3" height="4" fill="#000"/><rect x="7" y="5" width="1" height="3" fill="#000"/><rect x="1" y="5" width="3" height="2" fill="#00ffff"/><rect x="4" y="4" width="1" height="5" fill="#00ffff"/><rect x="5" y="5" width="1" height="3" fill="#00ffff"/><rect x="6" y="6" width="1" height="1" fill="#00ffff"/></svg>
<div class="t" style="left:723px;top:398px;font-size:10.7px;color:#000;">(DF100)</div>
<div class="t" style="left:548px;top:420px;font-size:10.7px;color:#000;">PV</div>
<div class="r" style="left:589px;top:414px;width:45px;height:21px;background:#f0f0f0;border:1px solid #7a7a7a;box-shadow:inset 1px 1px 0 #fff, inset -1px -1px 0 #fff;"></div>
<div class="t" style="left:592px;top:419px;font-size:10.7px;color:#000;">120</div>
<div class="t" style="left:723px;top:420px;font-size:10.7px;color:#000;">(DF112)</div>
<div class="t" style="left:548px;top:442px;font-size:10.7px;color:#000;">RawPV</div>
<div class="r" style="left:589px;top:436px;width:45px;height:21px;background:#f0f0f0;border:1px solid #7a7a7a;box-shadow:inset 1px 1px 0 #fff, inset -1px -1px 0 #fff;"></div>
<div class="t" style="left:592px;top:441px;font-size:10.7px;color:#000;">120</div>
<div class="t" style="left:723px;top:442px;font-size:10.7px;color:#000;">(DF111)</div>
<div class="t" style="left:548px;top:464px;font-size:10.7px;color:#000;">Bias</div>
<div class="r" style="left:589px;top:458px;width:45px;height:21px;background:#f0f0f0;border:1px solid #7a7a7a;box-shadow:inset 1px 1px 0 #fff, inset -1px -1px 0 #fff;"></div>
<div class="t" style="left:592px;top:463px;font-size:10.7px;color:#000;">80.0002</div>
<div class="t" style="left:640px;top:464px;font-size:10.7px;color:#000;">%</div>
<div class="t" style="left:723px;top:464px;font-size:10.7px;color:#000;">(DF104)</div>
<div class="t" style="left:549px;top:486px;font-size:10.7px;color:#000;">Output</div>
<div class="r" style="left:589px;top:480px;width:45px;height:21px;background:#f0f0f0;border:1px solid #7a7a7a;box-shadow:inset 1px 1px 0 #fff, inset -1px -1px 0 #fff;"></div>
<div class="t" style="left:592px;top:485px;font-size:10.7px;color:#000;">80.0002</div>
<div class="r" style="left:634px;top:480px;width:45px;height:21px;background:#fff;border:1px solid #7a7a7a;"></div>
<div class="t" style="left:637px;top:485px;font-size:10.7px;color:#000;">49</div>
<div class="r" style="left:680px;top:480px;width:25px;height:21px;background:#f0f0f0;box-shadow: inset -1px -1px 0 #696969, inset 1px 1px 0 #fff, inset -2px -2px 0 #a0a0a0, inset 2px 2px 0 #e3e3e3;"></div>
<svg style="left:684px;top:486px" width="17" height="11" shape-rendering="crispEdges"><rect x="3" y="0" width="13" height="10" fill="#000"/><rect x="4" y="1" width="2" height="3" fill="#c0c0c0"/><rect x="7" y="1" width="2" height="8" fill="#c0c0c0"/><rect x="10" y="1" width="2" height="8" fill="#c0c0c0"/><rect x="13" y="1" width="2" height="8" fill="#c0c0c0"/><rect x="5" y="2" width="1" height="1" fill="#ff0000"/><rect x="8" y="2" width="1" height="1" fill="#ff0000"/><rect x="11" y="2" width="1" height="1" fill="#ff0000"/><rect x="14" y="2" width="1" height="1" fill="#ff0000"/><rect x="0" y="4" width="3" height="4" fill="#000"/><rect x="7" y="5" width="1" height="3" fill="#000"/><rect x="1" y="5" width="3" height="2" fill="#00ffff"/><rect x="4" y="4" width="1" height="5" fill="#00ffff"/><rect x="5" y="5" width="1" height="3" fill="#00ffff"/><rect x="6" y="6" width="1" height="1" fill="#00ffff"/></svg>
<div class="t" style="left:710px;top:486px;font-size:10.7px;color:#000;">%</div>
<div class="t" style="left:723px;top:486px;font-size:10.7px;color:#000;">(DF108)</div>
<div class="t" style="left:542px;top:516px;font-size:10.7px;color:#000;">Output Range</div>
<div class="t" style="left:545px;top:536px;font-size:10.7px;color:#000;">Upper</div>
<div class="r" style="left:589px;top:530px;width:45px;height:21px;background:#f0f0f0;border:1px solid #7a7a7a;box-shadow:inset 1px 1px 0 #fff, inset -1px -1px 0 #fff;"></div>
<div class="t" style="left:592px;top:535px;font-size:10.7px;color:#000;">100</div>
<div class="r" style="left:634px;top:530px;width:45px;height:21px;background:#fff;border:1px solid #7a7a7a;"></div>
<div class="t" style="left:637px;top:535px;font-size:10.7px;color:#000;">100.0</div>
<div class="r" style="left:680px;top:530px;width:25px;height:21px;background:#f0f0f0;box-shadow: inset -1px -1px 0 #696969, inset 1px 1px 0 #fff, inset -2px -2px 0 #a0a0a0, inset 2px 2px 0 #e3e3e3;"></div>
<svg style="left:684px;top:536px" width="17" height="11" shape-rendering="crispEdges"><rect x="3" y="0" width="13" height="10" fill="#000"/><rect x="4" y="1" width="2" height="3" fill="#c0c0c0"/><rect x="7" y="1" width="2" height="8" fill="#c0c0c0"/><rect x="10" y="1" width="2" height="8" fill="#c0c0c0"/><rect x="13" y="1" width="2" height="8" fill="#c0c0c0"/><rect x="5" y="2" width="1" height="1" fill="#ff0000"/><rect x="8" y="2" width="1" height="1" fill="#ff0000"/><rect x="11" y="2" width="1" height="1" fill="#ff0000"/><rect x="14" y="2" width="1" height="1" fill="#ff0000"/><rect x="0" y="4" width="3" height="4" fill="#000"/><rect x="7" y="5" width="1" height="3" fill="#000"/><rect x="1" y="5" width="3" height="2" fill="#00ffff"/><rect x="4" y="4" width="1" height="5" fill="#00ffff"/><rect x="5" y="5" width="1" height="3" fill="#00ffff"/><rect x="6" y="6" width="1" height="1" fill="#00ffff"/></svg>
<div class="t" style="left:710px;top:536px;font-size:10.7px;color:#000;">%</div>
<div class="t" style="left:723px;top:536px;font-size:10.7px;color:#000;">(DF110)</div>
<div class="t" style="left:545px;top:559px;font-size:10.7px;color:#000;">Lower</div>
<div class="r" style="left:589px;top:552px;width:45px;height:21px;background:#f0f0f0;border:1px solid #7a7a7a;box-shadow:inset 1px 1px 0 #fff, inset -1px -1px 0 #fff;"></div>
<div class="t" style="left:592px;top:557px;font-size:10.7px;color:#000;">0</div>
<div class="r" style="left:634px;top:552px;width:45px;height:21px;background:#fff;border:1px solid #7a7a7a;"></div>
<div class="t" style="left:637px;top:557px;font-size:10.7px;color:#000;">0.0</div>
<div class="r" style="left:680px;top:552px;width:25px;height:21px;background:#f0f0f0;box-shadow: inset -1px -1px 0 #696969, inset 1px 1px 0 #fff, inset -2px -2px 0 #a0a0a0, inset 2px 2px 0 #e3e3e3;"></div>
<svg style="left:684px;top:558px" width="17" height="11" shape-rendering="crispEdges"><rect x="3" y="0" width="13" height="10" fill="#000"/><rect x="4" y="1" width="2" height="3" fill="#c0c0c0"/><rect x="7" y="1" width="2" height="8" fill="#c0c0c0"/><rect x="10" y="1" width="2" height="8" fill="#c0c0c0"/><rect x="13" y="1" width="2" height="8" fill="#c0c0c0"/><rect x="5" y="2" width="1" height="1" fill="#ff0000"/><rect x="8" y="2" width="1" height="1" fill="#ff0000"/><rect x="11" y="2" width="1" height="1" fill="#ff0000"/><rect x="14" y="2" width="1" height="1" fill="#ff0000"/><rect x="0" y="4" width="3" height="4" fill="#000"/><rect x="7" y="5" width="1" height="3" fill="#000"/><rect x="1" y="5" width="3" height="2" fill="#00ffff"/><rect x="4" y="4" width="1" height="5" fill="#00ffff"/><rect x="5" y="5" width="1" height="3" fill="#00ffff"/><rect x="6" y="6" width="1" height="1" fill="#00ffff"/></svg>
<div class="t" style="left:710px;top:558px;font-size:10.7px;color:#000;">%</div>
<div class="t" style="left:723px;top:558px;font-size:10.7px;color:#000;">(DF109)</div>
<div class="r" style="left:621px;top:590px;width:153px;height:25px;background:#f0f0f0;box-shadow: inset -1px -1px 0 #696969, inset 1px 1px 0 #fff, inset -2px -2px 0 #a0a0a0, inset 2px 2px 0 #e3e3e3;"></div>
<svg style="left:638px;top:598px" width="17" height="11" shape-rendering="crispEdges"><rect x="3" y="0" width="13" height="10" fill="#000"/><rect x="4" y="1" width="2" height="3" fill="#c0c0c0"/><rect x="7" y="1" width="2" height="8" fill="#c0c0c0"/><rect x="10" y="1" width="2" height="8" fill="#c0c0c0"/><rect x="13" y="1" width="2" height="8" fill="#c0c0c0"/><rect x="5" y="2" width="1" height="1" fill="#ff0000"/><rect x="8" y="2" width="1" height="1" fill="#ff0000"/><rect x="11" y="2" width="1" height="1" fill="#ff0000"/><rect x="14" y="2" width="1" height="1" fill="#ff0000"/><rect x="0" y="4" width="3" height="4" fill="#000"/><rect x="7" y="5" width="1" height="3" fill="#000"/><rect x="1" y="5" width="3" height="2" fill="#00ffff"/><rect x="4" y="4" width="1" height="5" fill="#00ffff"/><rect x="5" y="5" width="1" height="3" fill="#00ffff"/><rect x="6" y="6" width="1" height="1" fill="#00ffff"/></svg>
<div class="t" style="left:658px;top:598px;font-size:10.7px;color:#000;">Write all Edits to PLC</div>
<div class="r" style="left:10px;top:635px;width:159px;height:23px;background:#e1e1e1;border:1px solid #adadad;"></div>
<div class="t" style="left:13.5px;top:642px;font-size:10.95px;color:#000;">Save Current Values to Project</div>
<div class="r" style="left:178px;top:635px;width:168px;height:23px;background:#e1e1e1;border:1px solid #adadad;"></div>
<div class="t" style="left:207.3px;top:642px;font-size:10.95px;color:#000;">Read Project Settings</div>
<div class="r" style="left:530px;top:635px;width:73px;height:23px;background:#e1e1e1;border:2px solid #0078d7;"></div>
<div class="t" style="left:416.5px;width:300px;text-align:center;top:642px;font-size:10.7px;color:#000;">OK</div>
<div class="r" style="left:618px;top:635px;width:73px;height:23px;background:#e1e1e1;border:1px solid #adadad;"></div>
<div class="t" style="left:503.5px;width:300px;text-align:center;top:642px;font-size:10.7px;color:#000;">Cancel</div>
<div class="r" style="left:706px;top:635px;width:73px;height:23px;background:#e1e1e1;border:1px solid #adadad;"></div>
<div class="t" style="left:592.5px;width:300px;text-align:center;top:642px;font-size:10.7px;color:#000;">Help</div>
<div class="r" style="left:0px;top:0px;width:796px;height:669px;border:1px solid #1883d7;"></div>
</body></html>
